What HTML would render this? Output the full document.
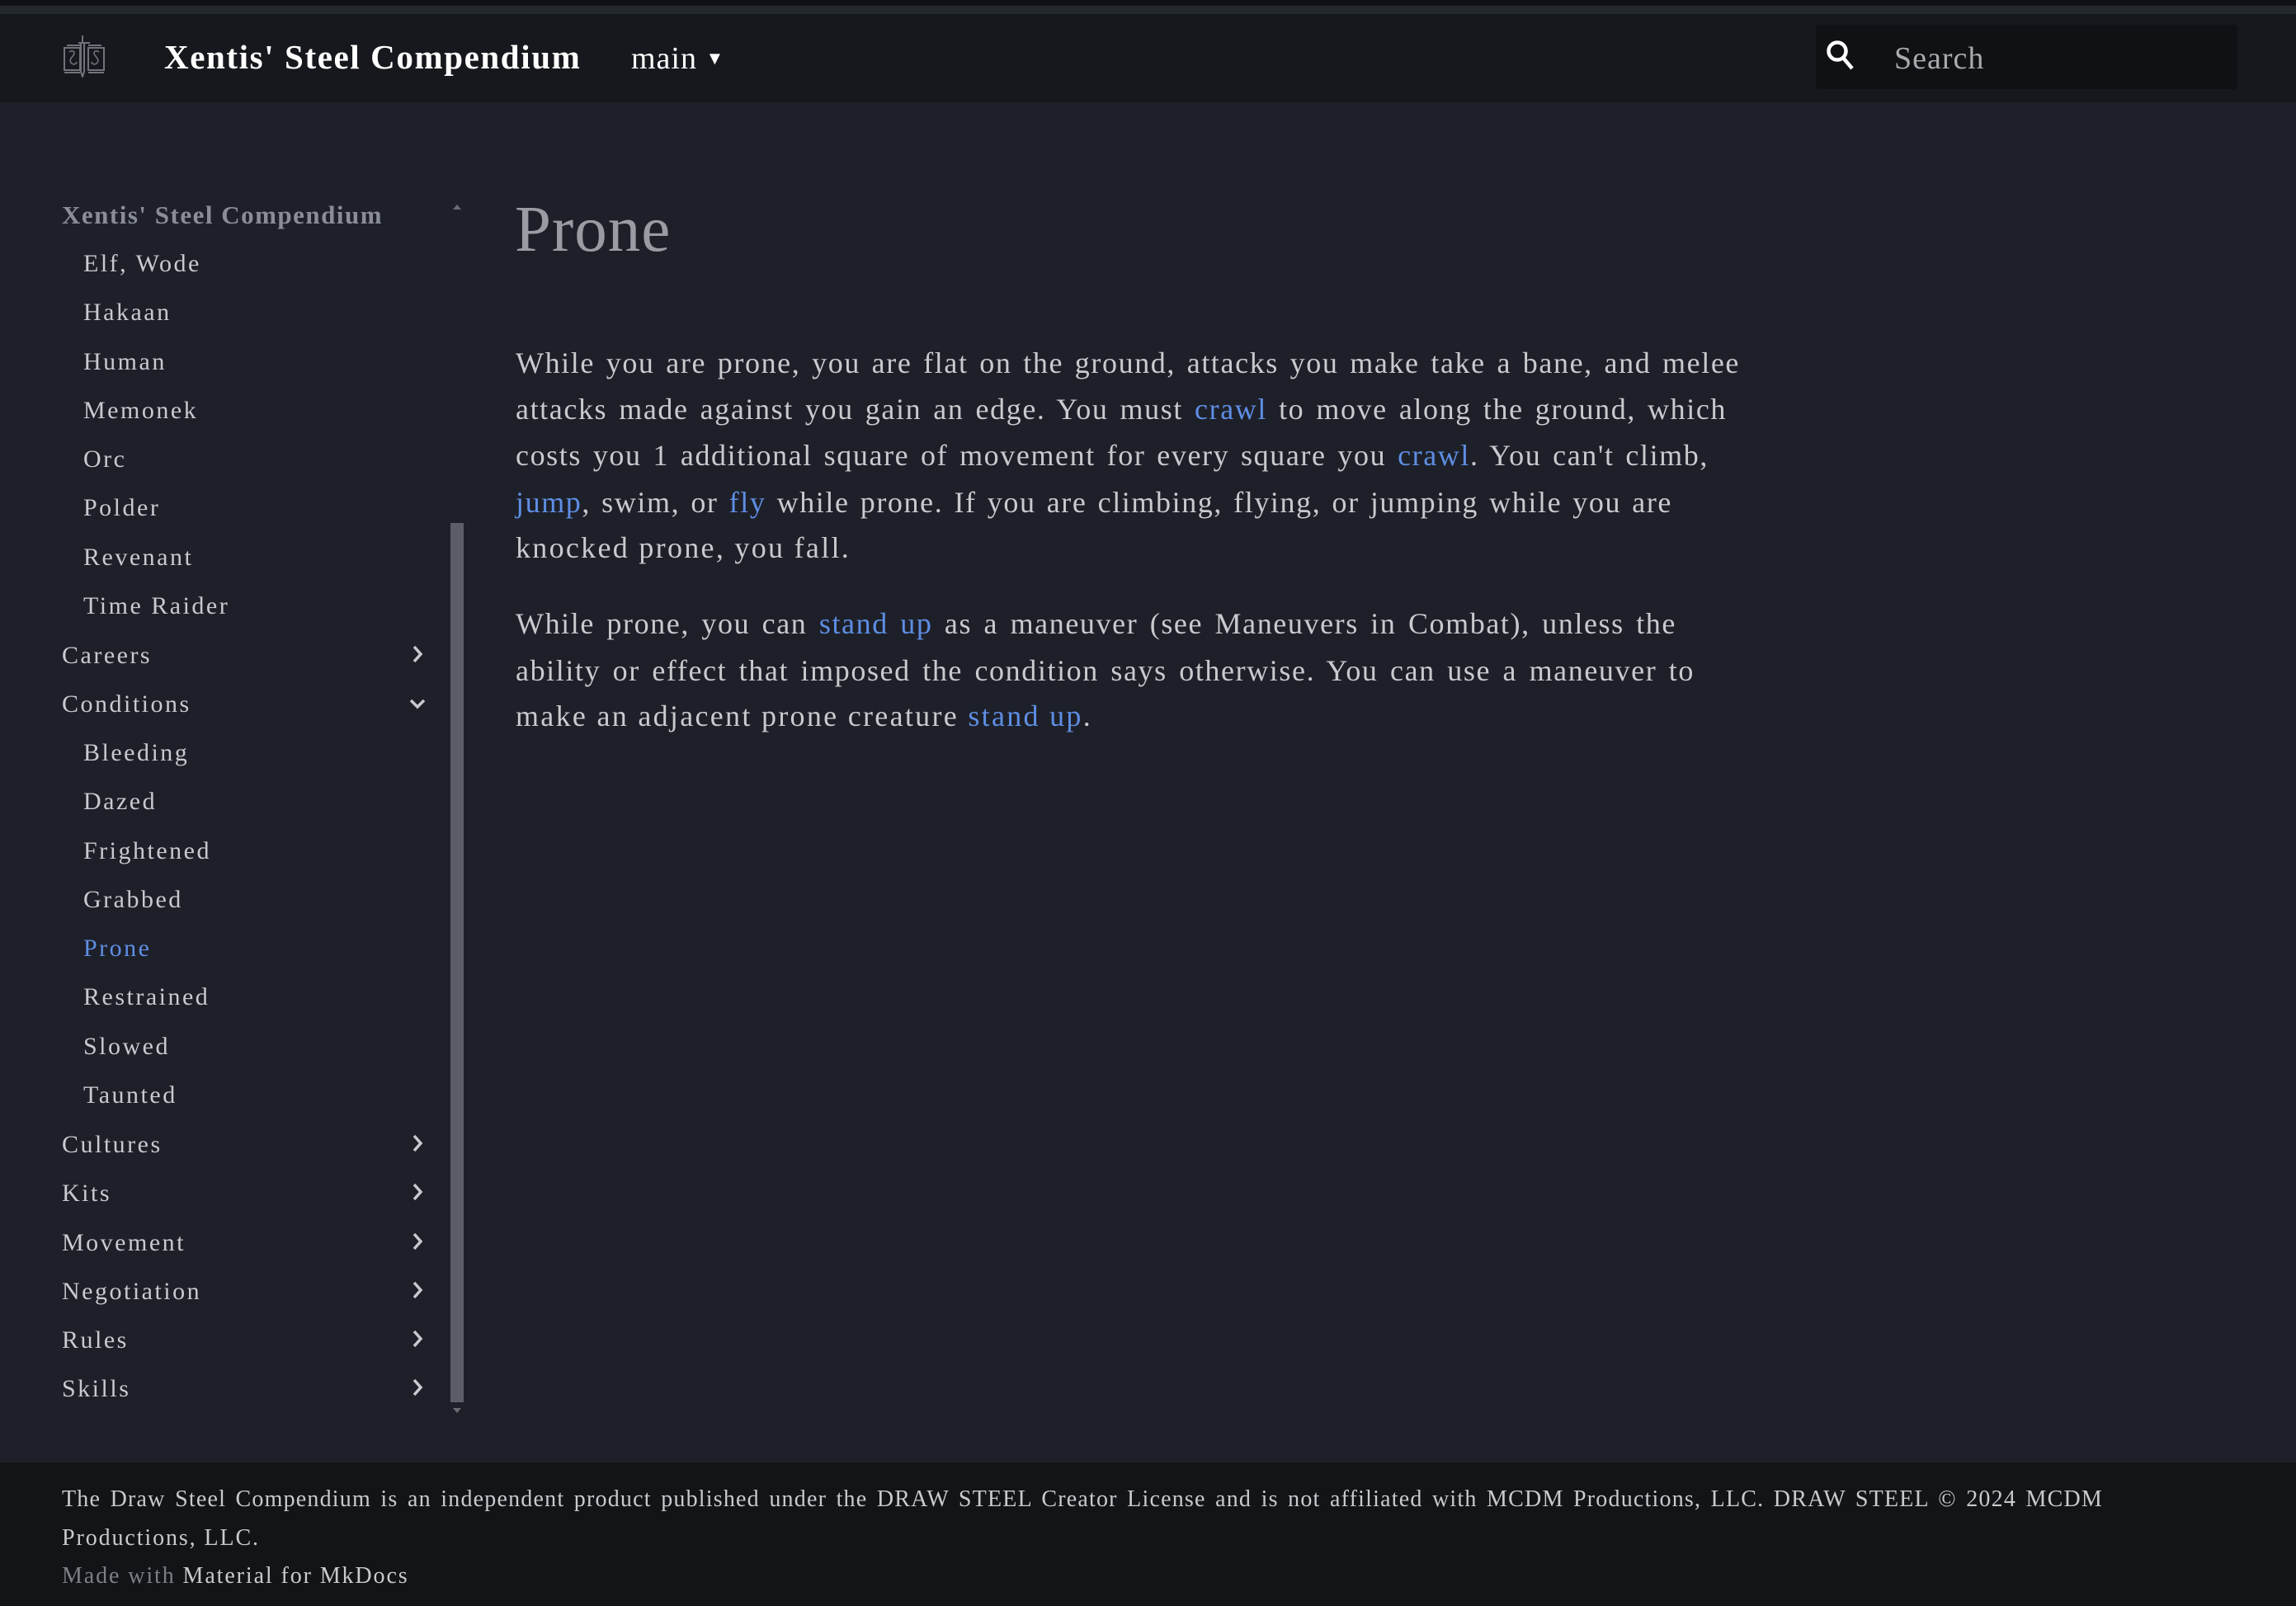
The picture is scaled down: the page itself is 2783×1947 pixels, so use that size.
<!DOCTYPE html>
<html><head><meta charset="utf-8"><style>
*{margin:0;padding:0;box-sizing:border-box}
html,body{width:2783px;height:1947px;overflow:hidden;background:#1e2029;font-family:"Liberation Serif",serif}
.abs{position:absolute}
#top0{left:0;top:0;width:2783px;height:7px;background:#0f1116}
#top1{left:0;top:7px;width:2783px;height:10px;background:#23282d}
#hdr{left:0;top:17px;width:2783px;height:107px;background:#16181d}
.title{left:199px;top:45px;font-size:41px;font-weight:bold;color:#fff;white-space:nowrap;letter-spacing:1.6px}
.main{left:765px;top:49px;font-size:38px;color:#fff;letter-spacing:1px}
#search{left:2201px;top:30px;width:511px;height:78px;background:#0f1115;border-radius:4px}
.stext{left:2296px;top:49px;font-size:38px;color:#a9abaf;letter-spacing:1px}
.side{font-size:30px;color:#c8cad0;white-space:nowrap;letter-spacing:2.5px;line-height:59.3px}
.sideT{left:75px;top:243px;font-size:31px;font-weight:bold;color:#8a8d95;white-space:nowrap;letter-spacing:1.5px}
#scroll{left:546px;top:634px;width:16px;height:1066px;background:#5b5d67}
h1{position:absolute;left:624px;top:234px;font-size:79px;font-weight:normal;color:#9a9ba3;letter-spacing:1px}
.ln{position:absolute;left:625px;font-size:36px;color:#c9cace;letter-spacing:1.6px;line-height:56px;text-align:justify;text-align-last:justify;white-space:normal}
.ln.l{text-align-last:left;white-space:nowrap;letter-spacing:2.3px}
a{color:#5e8ee4;text-decoration:none}
#foot{left:0;top:1773px;width:2783px;height:174px;background:#131418}
.ft{position:absolute;left:75px;font-size:28px;color:#c9cace;letter-spacing:1.2px;white-space:normal;text-align:justify;text-align-last:justify}
.ft.l{letter-spacing:1.9px;text-align-last:left;white-space:nowrap}
</style></head><body>
<div class="abs" id="top0"></div><div class="abs" id="top1"></div>
<div class="abs" id="hdr"></div>
<svg class="abs" style="left:75px;top:43px" width="54" height="51" viewBox="0 0 54 51" fill="none" stroke="#70737b" stroke-width="2">
<path d="M3 15 H22 V42 H3 Z M32 15 H51 V42 H32 Z M6 12 H22 M32 12 H48 M3 45 H22 M32 45 H51"/>
<path d="M25 0 V8 M20 9 H34 M27 9 V44 L25 50 L23 44 V9" />
<path d="M9 20 c4 -3 8 0 5 4 c-3 4 -6 6 -2 10 c3 2 6 0 6 -2 M45 20 c-4 -3 -8 0 -5 4 c3 4 6 6 2 10 c-3 2 -6 0 -6 -2" stroke-width="1.6"/>
</svg>
<div class="abs title">Xentis' Steel Compendium</div>
<div class="abs main">main <span style="font-size:22px;position:relative;top:-5px">▼</span></div>
<div class="abs" id="search"></div>
<svg class="abs" style="left:2212px;top:47px" width="40" height="42" viewBox="0 0 40 42"><circle cx="15" cy="15" r="10.5" stroke="#fff" stroke-width="4.5" fill="none"/><path d="M22 23 L33 36" stroke="#fff" stroke-width="4.5"/></svg>
<div class="abs stext">Search</div>

<div class="abs sideT">Xentis' Steel Compendium</div>
<div class="abs" style="left:549px;top:248px;width:0;height:0;border-left:5px solid transparent;border-right:5px solid transparent;border-bottom:6px solid #6a6c74"></div>
<div class="abs side" style="left:101px;top:290px">Elf, Wode<br>Hakaan<br>Human<br>Memonek<br>Orc<br>Polder<br>Revenant<br>Time Raider</div>
<div class="abs side" style="left:75px;top:765px">Careers<br>Conditions</div>
<div class="abs side" style="left:101px;top:883px">Bleeding<br>Dazed<br>Frightened<br>Grabbed<br><span style="color:#5e8ee4">Prone</span><br>Restrained<br>Slowed<br>Taunted</div>
<div class="abs side" style="left:75px;top:1358px">Cultures<br>Kits<br>Movement<br>Negotiation<br>Rules<br>Skills</div>
<svg class="abs" style="left:490px;top:760px" width="30" height="960" viewBox="0 0 30 960" fill="none" stroke="#c8cad0" stroke-width="3.5">
<path d="M12 24 L20 33 L12 42"/>
<path d="M8 89 L16 97 L24 89"/>
<path d="M12 617 L20 626 L12 635"/>
<path d="M12 676 L20 685 L12 694"/>
<path d="M12 736 L20 745 L12 754"/>
<path d="M12 795 L20 804 L12 813"/>
<path d="M12 854 L20 863 L12 872"/>
<path d="M12 913 L20 922 L12 931"/>
</svg>
<div class="abs" id="scroll"></div>
<div class="abs" style="left:549px;top:1707px;width:0;height:0;border-left:5px solid transparent;border-right:5px solid transparent;border-top:6px solid #6a6c74"></div>

<h1>Prone</h1>
<div class="ln" style="top:412px;width:1484px">While you are prone, you are flat on the ground, attacks you make take a bane, and melee</div>
<div class="ln" style="top:468px;width:1468px">attacks made against you gain an edge. You must <a>crawl</a> to move along the ground, which</div>
<div class="ln" style="top:524px;width:1446px">costs you 1 additional square of movement for every square you <a>crawl</a>. You can't climb,</div>
<div class="ln" style="top:581px;width:1402px"><a>jump</a>, swim, or <a>fly</a> while prone. If you are climbing, flying, or jumping while you are</div>
<div class="ln l" style="top:636px">knocked prone, you fall.</div>
<div class="ln" style="top:728px;width:1407px">While prone, you can <a>stand up</a> as a maneuver (see Maneuvers in Combat), unless the</div>
<div class="ln" style="top:785px;width:1429px">ability or effect that imposed the condition says otherwise. You can use a maneuver to</div>
<div class="ln l" style="top:840px">make an adjacent prone creature <a>stand up</a>.</div>

<div class="abs" id="foot"></div>
<div class="ft" style="top:1802px;width:2474px">The Draw Steel Compendium is an independent product published under the DRAW STEEL Creator License and is not affiliated with MCDM Productions, LLC. DRAW STEEL © 2024 MCDM</div>
<div class="ft l" style="top:1849px">Productions, LLC.</div>
<div class="ft l" style="top:1895px"><span style="color:#7d7f85">Made with</span> Material for MkDocs</div>
</body></html>
